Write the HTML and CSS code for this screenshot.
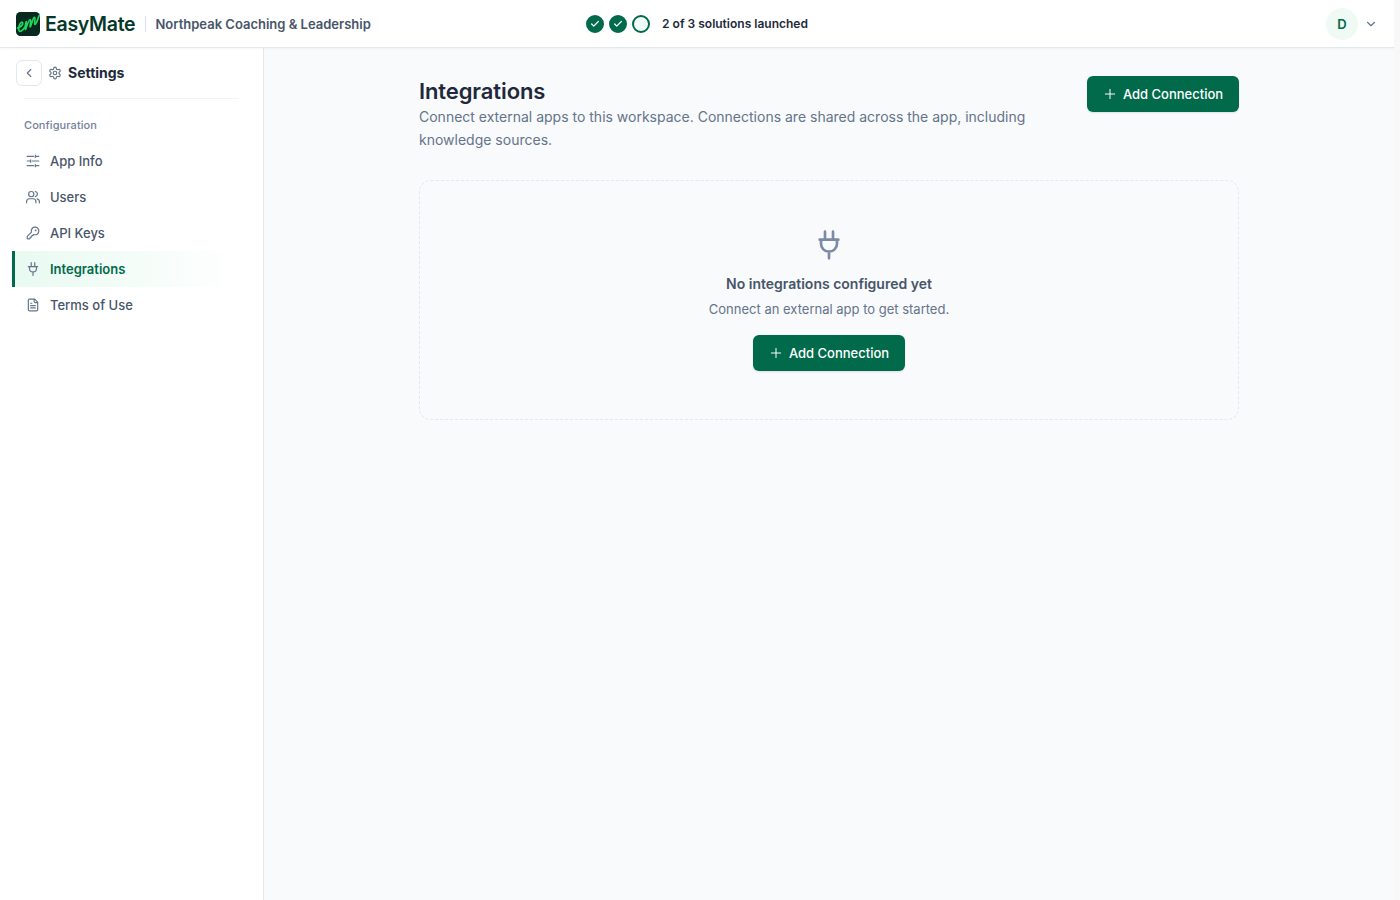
FILE: index.html
```html
<!DOCTYPE html>
<html lang="en">
<head>
<meta charset="utf-8">
<title>Integrations</title>
<link rel="stylesheet" href="styles.css">
</head>
<body>
<div class="app">
<header class="topbar">
  <div class="brand">
    <svg class="logo" width="24" height="24" viewBox="0 0 24 24" fill="none"><rect width="24" height="24" rx="4.5" fill="#06281f"/><path d="M1.500 16C4.500 15.500 7.500 12.500 6.500 10.500C5.200 9 2.500 13.500 2.700 17.300C3.200 21.500 6.800 18.500 9 15L10.300 9.500L9.600 17.500C11 13 12.800 7.500 14.200 7.600C15.500 8 13.500 14.700 14.200 15C15.200 14.500 16.800 5.200 18.400 5.300C20 5.700 17.800 12.300 19 12.300C20.500 12 21.500 7.500 23.200 3.500" stroke="#22d65b" stroke-width="1.7" stroke-linecap="round" stroke-linejoin="round"/></svg>
    <span class="wordmark">EasyMate</span>
    <span class="divider"></span>
    <span class="workspace">Northpeak Coaching &amp; Leadership</span>
  </div>
  <div class="progress">
    <span class="step done"><svg width="10" height="10" viewBox="0 0 24 24"><path d="M20 6 9 17l-5-5"/></svg></span>
    <span class="step done"><svg width="10" height="10" viewBox="0 0 24 24"><path d="M20 6 9 17l-5-5"/></svg></span>
    <span class="step"></span>
    <span class="progress-label">2 of 3 solutions launched</span>
  </div>
  <div class="account">
    <span class="avatar">D</span>
    <svg class="icon" width="14" height="14" viewBox="0 0 24 24"><path d="m6 9 6 6 6-6"/></svg>
  </div>
</header>
<div class="body">
<aside class="sidebar">
  <div class="side-head">
    <span class="back"><svg class="icon" width="14" height="14" viewBox="0 0 24 24"><path d="m15 18-6-6 6-6"/></svg></span>
    <svg class="icon" width="14" height="14" viewBox="0 0 24 24"><path d="M12.22 2h-.44a2 2 0 0 0-2 2v.18a2 2 0 0 1-1 1.73l-.43.25a2 2 0 0 1-2 0l-.15-.08a2 2 0 0 0-2.73.73l-.22.38a2 2 0 0 0 .73 2.73l.15.1a2 2 0 0 1 1 1.72v.51a2 2 0 0 1-1 1.74l-.15.09a2 2 0 0 0-.73 2.73l.22.38a2 2 0 0 0 2.73.73l.15-.08a2 2 0 0 1 2 0l.43.25a2 2 0 0 1 1 1.73V20a2 2 0 0 0 2 2h.44a2 2 0 0 0 2-2v-.18a2 2 0 0 1 1-1.73l.43-.25a2 2 0 0 1 2 0l.15.08a2 2 0 0 0 2.73-.73l.22-.39a2 2 0 0 0-.73-2.73l-.15-.08a2 2 0 0 1-1-1.74v-.5a2 2 0 0 1 1-1.74l.15-.09a2 2 0 0 0 .73-2.73l-.22-.38a2 2 0 0 0-2.73-.73l-.15.08a2 2 0 0 1-2 0l-.43-.25a2 2 0 0 1-1-1.73V4a2 2 0 0 0-2-2z"/><circle cx="12" cy="12" r="3"/></svg>
    <span class="side-title">Settings</span>
  </div>
  <div class="side-label">Configuration</div>
  <nav class="nav">
    <a class="item"><svg class="icon" width="14" height="14" viewBox="0 0 24 24"><path d="M2 4h11M17 4h5M16 2v4M2 12h5M11 12h11M8 10v4M2 20h11M17 20h5M16 18v4"/></svg><span>App Info</span></a>
    <a class="item"><svg class="icon" width="14" height="14" viewBox="0 0 24 24"><path d="M17 22v-2a5 5 0 0 0-5-5H6a5 5 0 0 0-5 5v2"/><circle cx="9" cy="7" r="4.500"/><path d="M23 22v-2a5 5 0 0 0-4-4.870M16 2.600a4.500 4.500 0 0 1 0 8.800"/></svg><span>Users</span></a>
    <a class="item"><svg class="icon" width="14" height="14" viewBox="0 0 24 24"><path d="M2.586 17.414A2 2 0 0 0 2 18.828V21a1 1 0 0 0 1 1h3a1 1 0 0 0 1-1v-1a1 1 0 0 1 1-1h1a1 1 0 0 0 1-1v-1a1 1 0 0 1 1-1h.172a2 2 0 0 0 1.414-.586l.814-.814a6.500 6.500 0 1 0-4-4z"/><circle cx="16.5" cy="7.5" r=".6"/></svg><span>API Keys</span></a>
    <a class="item active"><svg class="icon" width="14" height="14" viewBox="0 0 24 24"><path d="M12 23v-6M9 7V1M15 7V1M4 8h16M6 8v3a6 6 0 0 0 12 0V8z"/></svg><span>Integrations</span></a>
    <a class="item"><svg class="icon" width="14" height="14" viewBox="0 0 24 24"><path d="M15 2H6a2 2 0 0 0-2 2v16a2 2 0 0 0 2 2h12a2 2 0 0 0 2-2V7zM14 2v4a2 2 0 0 0 2 2h4M10 9H8M16 13H8M16 17H8"/></svg><span>Terms of Use</span></a>
  </nav>
</aside>
<main class="main">
  <div class="content">
    <div class="page-head">
      <div class="intro">
        <h1 class="title">Integrations</h1>
        <p class="desc">Connect external apps to this workspace. Connections are shared across the app, including<br>knowledge sources.</p>
      </div>
      <button class="btn"><svg width="14" height="14" viewBox="0 0 24 24"><path d="M4 12h16M12 4v16"/></svg><span>Add Connection</span></button>
    </div>
    <section class="empty">
      <svg class="plug" width="32" height="32" viewBox="0 0 24 24"><path d="M12 22v-5M9 7V2M15 7V2M5 8h14M6 8v3a6 6 0 0 0 12 0V8z"/></svg>
      <h2 class="empty-title">No integrations configured yet</h2>
      <p class="empty-text">Connect an external app to get started.</p>
      <button class="btn"><svg width="14" height="14" viewBox="0 0 24 24"><path d="M4 12h16M12 4v16"/></svg><span>Add Connection</span></button>
    </section>
  </div>
</main>
</div>
</div>
</body>
</html>
```
FILE: styles.css
```css
* { box-sizing: border-box; }
body { margin: 0; background: #f9fafc; font-family: Inter, "Liberation Sans", sans-serif; color: #1e293b; }
h1, h2, p { margin: 0; }
svg { display: block; flex: none; fill: none; stroke: currentColor; stroke-width: 2; stroke-linecap: round; stroke-linejoin: round; }
.logo { stroke: none; }
.app { width: 1400px; height: 900px; display: flex; flex-direction: column; overflow: hidden; white-space: nowrap; border-right: 6px solid #f8f8f8; }
.topbar { height: 48px; flex: none; display: grid; grid-template-columns: 1fr auto 1fr; align-items: center; padding: 0 16px; background: #fff; border-bottom: 1px solid #e2e8f0; box-shadow: 0 1px 2px rgba(15, 23, 42, .04); z-index: 1; }
.brand { display: flex; align-items: center; }
.wordmark { margin-left: 5px; width: 90px; font-size: 19.5px; font-weight: 600; letter-spacing: -.3px; color: #06382a; }
.divider { width: 1px; height: 16px; background: #d5e0e8; margin: 0 9.5px 0 10px; }
.workspace { font-size: 13px; font-weight: 600; color: #475569; }
.progress { display: flex; align-items: center; gap: 5px; }
.step { width: 18px; height: 18px; border: 2px solid #006a4a; border-radius: 50%; background: #f0fdf7; display: flex; align-items: center; justify-content: center; color: #fff; }
.done { background: #006a4a; }
.done svg { stroke-width: 3; }
.progress-label { margin-left: 7px; font-size: 12px; font-weight: 600; }
.account { display: flex; justify-content: flex-end; align-items: center; gap: 6px; }
.avatar { width: 32px; height: 32px; border-radius: 50%; background: #effaf4; color: #006a4a; font-size: 13px; font-weight: 600; display: flex; align-items: center; justify-content: center; }
.icon { color: #64748b; }
.body { flex: 1; display: flex; }
.sidebar { width: 264px; background: #fff; border-right: 1px solid #e5e7eb; padding: 12px 24px 0 12px; }
.side-head { display: flex; align-items: center; gap: 6px; padding-left: 4px; height: 26px; }
.back { width: 26px; height: 26px; border: 1px solid #e2e8f0; border-radius: 6px; display: flex; align-items: center; justify-content: center; }
.side-title { font-size: 14px; line-height: 18px; padding-bottom: 1px; font-weight: 700; }
.side-label { margin: 12px 0 0 12px; padding-top: 18px; border-top: 1px solid #f1f3f6; font-size: 11px; line-height: 16px; font-weight: 500; color: #73819a; letter-spacing: .08px; height: 45px; }
.nav { display: flex; flex-direction: column; }
.item { height: 36px; display: flex; align-items: center; gap: 10px; padding-left: 11px; border-left: 3px solid transparent; font-size: 13px; font-weight: 500; color: #475569; }
.active { border-color: #006a4a; color: #006a4a; font-weight: 600; background: linear-gradient(90deg, #e8faf1, #fff); }
.main { flex: 1; display: flex; justify-content: center; padding-top: 28px; }
.content { width: 820px; }
.page-head { display: flex; justify-content: space-between; align-items: flex-start; height: 104px; }
.title { font-size: 22px; line-height: 30px; height: 29px; font-weight: 600; letter-spacing: -.1px; }
.desc { font-size: 14px; line-height: 23px; color: #64748b; }
.btn { width: 152px; height: 36px; border: 0; border-radius: 6px; background: #006a4a; color: #fff; font: 500 13px Inter, sans-serif; display: flex; align-items: center; justify-content: center; gap: 6px; padding: 0; box-shadow: 0 1px 2px rgba(15, 23, 42, .12); white-space: nowrap; }
.btn svg { stroke-width: 1.7; }
.empty { height: 240px; border: 1px dashed #e2e8f0; border-radius: 12px; display: flex; flex-direction: column; align-items: center; padding-top: 48px; }
.plug { color: #7c8ba5; }
.empty-title { margin-top: 11px; font-size: 14px; line-height: 24px; font-weight: 600; color: #475569; }
.empty-text { margin: 3px 0 16px; font-size: 13px; line-height: 20px; color: #64748b; }
```
